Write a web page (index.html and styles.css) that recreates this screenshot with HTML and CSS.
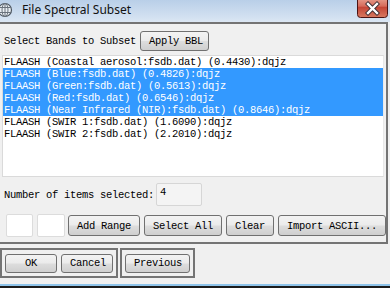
FILE: index.html
```html
<!DOCTYPE html>
<html>
  <head>
    <meta charset="utf-8">
    <link rel="stylesheet" href="styles.css">
  </head>
  <body>
    <div class="window">
      <div class="titlebar">
        <svg class="app_icon" width="16" height="16" viewBox="0 0 16 16">
          <circle cx="8" cy="8" r="6.5" fill="#e9eef3" stroke="#4d5660" stroke-width="1.2"/>
          <ellipse cx="8" cy="8" rx="3" ry="6.5" fill="none" stroke="#6a737c" stroke-width="1"/>
          <path d="M1.8 5.5 H14.2 M1.8 10.5 H14.2 M8 1.5 V14.5" stroke="#6a737c" stroke-width="1"/>
        </svg>
        <span class="title">File Spectral Subset</span>
        <svg class="close_btn" width="31" height="18" viewBox="0 0 31 18">
          <defs>
            <linearGradient id="cg" x1="0" y1="0" x2="0" y2="1">
              <stop offset="0" stop-color="#e9a797"/>
              <stop offset="0.45" stop-color="#d66a5a"/>
              <stop offset="0.5" stop-color="#c44536"/>
              <stop offset="1" stop-color="#d87a62"/>
            </linearGradient>
          </defs>
          <rect x="0.5" y="-3" width="30" height="20.5" rx="3" fill="url(#cg)" stroke="#4b1414"/>
          <path d="M11 4 L20 13 M20 4 L11 13" stroke="#3a2a30" stroke-width="4.2" stroke-linecap="square"/>
          <path d="M11 4 L20 13 M20 4 L11 13" stroke="#ffffff" stroke-width="2.4" stroke-linecap="square"/>
        </svg>
      </div>

      <div class="panel">
        <div class="bands_row">
          <span>Select Bands to Subset</span>
          <button class="btn btn_bbl">Apply BBL</button>
        </div>

        <div class="band_list">
          <div class="band">FLAASH (Coastal aerosol:fsdb.dat) (0.4430):dqjz</div>
          <div class="band selected">FLAASH (Blue:fsdb.dat) (0.4826):dqjz</div>
          <div class="band selected">FLAASH (Green:fsdb.dat) (0.5613):dqjz</div>
          <div class="band selected">FLAASH (Red:fsdb.dat) (0.6546):dqjz</div>
          <div class="band selected">FLAASH (Near Infrared (NIR):fsdb.dat) (0.8646):dqjz</div>
          <div class="band">FLAASH (SWIR 1:fsdb.dat) (1.6090):dqjz</div>
          <div class="band">FLAASH (SWIR 2:fsdb.dat) (2.2010):dqjz</div>
        </div>

        <div class="count_row">
          <span>Number of items selected:</span>
          <div class="count_box">4</div>
        </div>

        <div class="tools_row">
          <div class="field"></div>
          <div class="field"></div>
          <button class="btn btn_add">Add Range</button>
          <button class="btn">Select All</button>
          <button class="btn">Clear</button>
          <button class="btn">Import ASCII...</button>
        </div>
      </div>

      <div class="footer">
        <div class="group">
          <button class="btn btn_wide">OK</button>
          <button class="btn btn_wide">Cancel</button>
        </div>
        <div class="group">
          <button class="btn btn_prev">Previous</button>
        </div>
      </div>

      <div class="screen_edge"></div>
    </div>
  </body>
</html>
```

FILE: styles.css
```css
html, body {
  margin: 0;
  padding: 0;
}

body {
  width: 390px;
  height: 288px;
  overflow: hidden;
  background: #f0f0f0;
  font-family: "Liberation Mono", "DejaVu Sans Mono", monospace;
  font-size: 10.5px;
  letter-spacing: -0.3px;
  color: #000;
}

.window {
  display: flex;
  flex-direction: column;
}

/* title bar */
.titlebar {
  height: 22px;
  display: flex;
  align-items: flex-start;
  background: linear-gradient(#b9cfe8, #d3e1f1 80%, #dce7f3);
  letter-spacing: 0;
}

.app_icon {
  margin: 2px 0 0 -3px;
  flex: none;
}

.title {
  margin-left: 9px;
  margin-top: 2px;
  font-family: "Noto Sans", "Open Sans", sans-serif;
  font-size: 12px;
  color: #111;
  line-height: 16px;
}

.close_btn {
  margin-left: auto;
  margin-right: 2px;
  flex: none;
}

/* main panel */
.panel {
  box-sizing: border-box;
  width: 388px;
  height: 222px;
  border: 2px solid #747474;
  border-left: none;
  display: flex;
  flex-direction: column;
}

.bands_row {
  display: flex;
  align-items: center;
  height: 20px;
  margin-top: 7px;
  padding-left: 4px;
  gap: 4px;
}

.btn {
  box-sizing: border-box;
  height: 21px;
  padding: 0 8px;
  border: 1px solid #707070;
  border-radius: 3px;
  background: linear-gradient(#f3f3f3 0%, #ebebeb 48%, #dddddd 52%, #cfcfcf 100%);
  font-family: inherit;
  font-size: inherit;
  letter-spacing: inherit;
  color: #000;
  white-space: nowrap;
}

.btn_bbl {
  height: 20px;
  width: 69px;
}

.band_list {
  box-sizing: border-box;
  margin: 4px 0 0 2px;
  width: 382px;
  height: 122px;
  background: #fff;
  border: 1px solid #dadada;
  border-right-color: #e8e8e8;
}

.band {
  height: 12px;
  line-height: 12px;
  padding-left: 1px;
  white-space: nowrap;
}

.band.selected {
  background: #3399ff;
  color: #fff;
}

.count_row {
  display: flex;
  align-items: center;
  margin-top: 6px;
  padding-left: 4px;
  gap: 2px;
}

.count_box {
  box-sizing: border-box;
  width: 46px;
  height: 23px;
  padding: 2px 0 0 3px;
  background: #f4f4f4;
  border: 1px solid #d6d6d6;
  border-radius: 2px;
}

.tools_row {
  display: flex;
  align-items: center;
  margin-top: 8px;
  padding-left: 6px;
  gap: 4px;
}

.field {
  box-sizing: border-box;
  width: 28px;
  height: 23px;
  background: #fff;
  border: 1px solid #dcdcdc;
  border-radius: 2px;
}

.btn_add {
  margin-left: -1px;
}

/* bottom buttons */
.footer {
  display: flex;
  gap: 2px;
  margin-top: 4px;
}

.group {
  box-sizing: border-box;
  height: 30px;
  display: flex;
  align-items: center;
  gap: 4px;
  padding: 0 3px;
  border: 2px solid #747474;
}

.btn_wide {
  width: 52px;
  height: 19px;
}

.btn_prev {
  width: 65px;
  height: 19px;
}

.screen_edge {
  margin-top: 6px;
  height: 2px;
  background: #8fc4ea;
  border-bottom: 2px solid #1c1c1c;
}
```
